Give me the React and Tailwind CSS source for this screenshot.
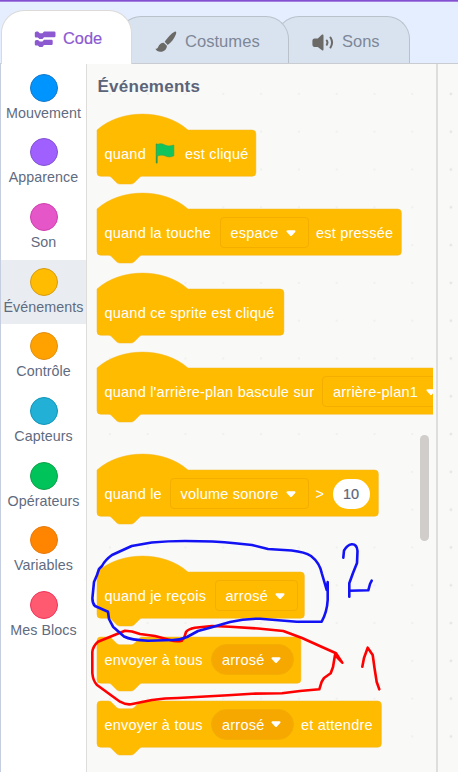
import React from "react";

const categories = [
  { name: "Mouvement", dot: "bg-[#0094ff] border-[#1779c9]" },
  { name: "Apparence", dot: "bg-[#a060ff] border-[#8152d0]" },
  { name: "Son", dot: "bg-[#e556c8] border-[#d03fae]" },
  { name: "Événements", dot: "bg-[#ffbc00] border-[#d69b12]", selected: true },
  { name: "Contrôle", dot: "bg-[#ffa200] border-[#e08e13]" },
  { name: "Capteurs", dot: "bg-[#22b0d6] border-[#1195b8]" },
  { name: "Opérateurs", dot: "bg-[#00c45a] border-[#10a048]" },
  { name: "Variables", dot: "bg-[#ff8500] border-[#e67a10]" },
  { name: "Mes Blocs", dot: "bg-[#ff5a70] border-[#f03358]" },
];

const NOTCH =
  "H48 c-2,0 -3,1 -4,2 l-4,4 c-1,1 -2,2 -4,2 h-12 c-2,0 -3,-1 -4,-2 l-4,-4 c-1,-1 -2,-2 -4,-2 H4 a4,4 0 0,1 -4,-4 z";

function Block({ width, hat, className, children }) {
  const w = (width - 0.6) / 0.948;
  const top = hat
    ? `M0,0 c25,-22 71,-22 96,0 H${w - 4} a4,4 0 0,1 4,4`
    : `M0,4 a4,4 0 0,1 4,-4 H12 c2,0 3,1 4,2 l4,4 c1,1 2,2 4,2 h12 c2,0 3,-1 4,-2 l4,-4 c1,-1 2,-2 4,-2 H${w - 4} a4,4 0 0,1 4,4`;
  return (
    <div className={`relative shrink-0 ${className}`} style={{ width }}>
      <svg
        className="absolute left-0 overflow-visible"
        style={{ top: hat ? 15.5 : -0.3 }}
        width={width}
        height="46"
      >
        <path
          transform="scale(.948 .965)"
          d={`${top} V44 a4,4 0 0,1 -4,4 ${NOTCH}`}
          fill="#ffbb00"
          stroke="#f2b828"
          strokeWidth=".5"
        />
      </svg>
      <div className={`relative flex h-[46px] items-center ${hat ? "mt-[16px]" : ""}`}>{children}</div>
    </div>
  );
}

const Arrow = () => (
  <svg className="mt-px shrink-0" width="10" height="7" viewBox="0 0 10 7">
    <path d="M1.500 1.200h7L5 5z" fill="#fff" stroke="#fff" strokeWidth="2" strokeLinejoin="round" />
  </svg>
);

function T({ className = "", children }) {
  return (
    <span className={`shrink-0 whitespace-nowrap pt-px text-[14.5px] leading-[18px] tracking-[0.22px] text-white ${className}`}>
      {children}
    </span>
  );
}

function Field({ className, round, children }) {
  return (
    <div
      className={`flex h-[31px] shrink-0 items-center justify-between border border-[#f3ae00] pr-[12px] pl-[10px] ${
        round ? "rounded-full bg-[#f7a800]" : "rounded-[4px]"
      } ${className}`}
    >
      {children}
      <Arrow />
    </div>
  );
}

function Tabs() {
  const tab = "flex items-center border border-b-0";
  return (
    <div className="flex h-[62px] items-end border-b border-[#c9cdd2] pl-px">
      <div className={`${tab} relative z-20 -mb-px h-[54px] w-[131px] rounded-t-[23px] border-[#dcdad8] bg-white pl-[32px] pt-[2px]`}>
        <svg className="mt-[2px]" width="22" height="17" viewBox="0 0 22 17" fill="#8c59d1">
          <path d="M2.500.5H4L5.800 2.200H8.500L10 .5H20.300Q21.500.500 21.500 1.700V5Q21.500 6.200 20.300 6.200H10L8.500 8H5.500L3.800 6.500H2Q.8 6.500.8 5.200V2Q.8.500 2.500.5z" />
          <path d="M2.500 9H4L5.800 10.500H8.500L10 8.700H17.500Q18.700 8.700 18.700 9.900V12.800Q18.700 14 17.500 14H10L8.500 16H5.500L3.800 14.500H2Q.8 14.500.8 13.200V10.500Q.8 9 2.500 9z" />
        </svg>
        <span className="ml-[7px] text-[16.400px] text-[#8c59d1] [-webkit-text-stroke:0.2px_#8c59d1]">Code</span>
      </div>
      <div className={`${tab} relative z-10 -ml-[14px] h-[47px] w-[171px] rounded-t-[23px] border-[#b9c2cb] bg-[#d9e3f0] pl-[36px] pt-[4px]`}>
        <svg width="22" height="22" viewBox="0 0 22 22" fill="#6b6a67">
          <path d="M20.800.7c.8.5.4 2-.2 3.400-1.700 4.100-4.600 7.700-7.900 9.900L9.700 10.800C12.500 6.700 16.500 2.300 19.600.8c.5-.2.900-.3 1.200-.1z" />
          <path d="M8.800 11.700l3.100 3.100c.1 3.500-3 6.200-6.500 6C3 20.700 1.300 19.500.4 17.700c1.600.1 2.400-.6 2.900-2 .8-2.400 2.700-4.100 5.500-4z" />
        </svg>
        <span className="ml-[8px] text-[16.600px] text-[#7e8797]">Costumes</span>
      </div>
      <div className={`${tab} -ml-[13px] h-[47px] w-[134px] rounded-t-[23px] border-[#b9c2cb] bg-[#d9e3f0] pl-[35px] pt-[2px]`}>
        <svg className="mt-[2px]" width="22" height="17" viewBox="0 0 22 17" fill="#6b6a67">
          <path d="M10 .6c.8-.5 1.500-.1 1.500.8v14c0 .9-.7 1.300-1.500.8L5.800 13H2.500C1.200 13 .4 12 .4 10.500V7c0-1.500.8-2.500 2.100-2.500h3.300z" />
          <path d="M14.800 6.500c.8 1.300.8 2.900 0 4.200M18.500 3.500c2 3.200 2 6.800 0 10" fill="none" stroke="#6b6a67" strokeWidth="2" strokeLinecap="round" />
        </svg>
        <span className="ml-[8px] text-[16.500px] text-[#7e8797]">Sons</span>
      </div>
    </div>
  );
}

function Categories() {
  return (
    <div className="flex w-[87px] shrink-0 flex-col border-l-[1.5px] border-r border-l-[#c5cee0] border-r-[#dedddb] bg-white pt-[1.500px]">
      {categories.map((c) => (
        <div
          key={c.name}
          className={`flex h-[64.700px] shrink-0 flex-col items-center pt-[8px] ${c.selected ? "bg-[#e9edf1]" : ""}`}
        >
          <div className={`h-[28px] w-[28px] shrink-0 rounded-full border ${c.dot}`} />
          <span className="mt-[2px] whitespace-nowrap text-[14.300px] leading-[18px] tracking-[0.050px] text-[#5f6b80]">{c.name}</span>
        </div>
      ))}
    </div>
  );
}

function Annotations() {
  return (
    <svg className="pointer-events-none absolute left-0 top-0 z-30" width="458" height="772" fill="none" strokeLinejoin="round" strokeLinecap="round" strokeWidth="2.600">
      <g stroke="#ff0000">
        <path d="M182 640.700Q176 642 170 640L155 636L140 634L132 631.500L125 630.700L117 634L98 641.700Q93 646 92.300 652V673Q93 681 97 685L120 701.700Q126 705 131 704.300L152 700L165 698.500L178 698L228 695.300L252 693.700L282 693.300L300 691L319.300 689.300L321.700 681.700L324 678L330.700 673.300L333 667L335 655L342.300 662.700L336 653.300L322 647L302 638L283.300 631L258 628.500L230 626.700L212 626L195 627.700Q188 629 186 632L184 638.300L181 640.700" />
        <path d="M362.300 666.700L364 658L367.700 647.700L372.700 655L374.500 668L376.700 682L379.300 689.300" />
      </g>
      <g stroke="#1212f5">
        <path d="M97 575L99 569L102 566Q105 560 112 555L131.700 546L151.700 542.500Q168 541 185 541Q215 541 235 543.300L252 545L268 549L291.700 550.500Q305 552 311 556Q320 563 322 574L326.700 590L327.700 582V600Q327 612 321.700 621.700H296.700L260 618.700Q244 618.700 230 622L210 627.700L198 631L187 637Q180 640 173 640L148 640.700Q131 640 124 636.500L113 626.700L109 619L108 611.700L95 606Q92 603 92.500 597L94 582L97 575" />
        <path d="M343.300 557.700L344 550.700Q347 545 351.700 544.300Q357 544 357.500 551L357 563L353 573L349.300 583.300V596.700M349.300 590.700L368.300 590.300L370 584L371.700 580.700" />
      </g>
    </svg>
  );
}

export default function App() {
  return (
    <div className="relative flex h-[772px] w-[458px] flex-col overflow-hidden bg-[#e5eeff] font-['Liberation_Sans',Arial,sans-serif]">
      <div className="h-[2px] shrink-0 border-b border-[#a47ee0] bg-[#8350d0]" />
      <Tabs />
      <div className="flex min-h-0 flex-1">
        <Categories />
        <div className="flex w-[351px] shrink-0 border-r-2 border-[#dededd] bg-[#f9f9f8] bg-[radial-gradient(circle,#f0f0ef_1px,transparent_1.5px)] bg-[length:37.800px_37.800px] bg-[position:4px_11px]">
          <div className="flex w-[346px] flex-col items-start overflow-hidden pl-[9.500px]">
            <h2 className="mt-[13px] h-[20px] shrink-0 pl-px text-[17px] font-bold leading-[20px] tracking-[0.250px] text-[#5b6478]">Événements</h2>
            <Block hat width={159.5} className="mt-[17.700px]">
              <T className="ml-[8px] w-[50.500px]">quand</T>
              <svg className="shrink-0" width="20" height="21" viewBox="0 0 20 21">
                <path d="M1.700 1.500V19.500" stroke="#2f9a4c" strokeWidth="1.800" strokeLinecap="round" />
                <path d="M1.500 2C5 0 8 1 10.500 2.300S16 3 18.800 2V12.800C15.500 14.500 12.500 14 10 12.800S4.500 12 1.500 13.500z" fill="#12c45c" stroke="#35a852" strokeWidth=".7" />
              </svg>
              <T className="ml-[10px]">est cliqué</T>
            </Block>
            <Block hat width={305} className="mt-[17.300px]">
              <T className="ml-[8px] w-[115px]">quand la touche</T>
              <Field className="w-[89px]"><T>espace</T></Field>
              <T className="ml-[7.500px]">est pressée</T>
            </Block>
            <Block hat width={187.5} className="mt-[17.300px]">
              <T className="ml-[8px]">quand ce sprite est cliqué</T>
            </Block>
            <Block hat width={360} className="mt-[17.300px]">
              <T className="ml-[8px] w-[217.500px]">quand l'arrière-plan bascule sur</T>
              <Field className="w-[127px]"><T>arrière-plan1</T></Field>
            </Block>
            <Block hat width={282} className="mt-[40.200px]">
              <T className="ml-[8px] w-[65px]">quand le</T>
              <Field className="w-[139px]"><T>volume sonore</T></Field>
              <T className="ml-[7px] w-[17px]">&gt;</T>
              <div className="flex h-[30px] w-[37px] items-center justify-center rounded-full bg-white pt-[2px] text-[14.500px] text-[#5b6478] [-webkit-text-stroke:0.2px_#5b6478]">10</div>
            </Block>
            <Block hat width={208} className="mt-[40px]">
              <T className="ml-[8px] w-[110px]">quand je reçois</T>
              <Field className="w-[83.500px]"><T>arrosé</T></Field>
            </Block>
            <Block width={204.5} className="mt-[18.200px]">
              <T className="ml-[8px] w-[106.500px]">envoyer à tous</T>
              <Field round className="w-[83px]"><T>arrosé</T></Field>
            </Block>
            <Block width={285} className="mt-[18.300px]">
              <T className="ml-[8px] w-[106.500px]">envoyer à tous</T>
              <Field round className="w-[83px]"><T>arrosé</T></Field>
              <T className="ml-[7px]">et attendre</T>
            </Block>
          </div>
        </div>
        <div className="flex-1 bg-[#f9f9f8] bg-[radial-gradient(circle,#e6e6e6_1px,transparent_1.8px)] bg-[length:37.800px_37.800px] bg-[position:-6px_11px]" />
      </div>
      <div className="absolute left-[420px] top-[435px] h-[106px] w-[9px] rounded-full bg-[#d0cdca]" />
      <Annotations />
    </div>
  );
}
